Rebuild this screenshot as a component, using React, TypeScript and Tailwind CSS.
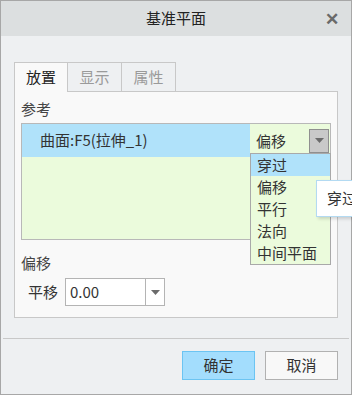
import React from 'react';

const font = { fontFamily: '"Microsoft YaHei", "Noto Sans CJK SC", "Liberation Sans", sans-serif' };

const options = ['穿过', '偏移', '平行', '法向', '中间平面'];

const Caret: React.FC = () => (
  <svg width="9" height="5" viewBox="0 0 9 5">
    <path d="M0 0 L9 0 L4.5 5 Z" fill="#6b6b6b" />
  </svg>
);

const App: React.FC = () => {
  return (
    <div
      className="w-[352px] h-[395px] overflow-hidden border border-[#a7a7a7] bg-[#eef0f2] flex flex-col text-[15px] text-[#333]"
      style={font}
    >
      {/* Title bar */}
      <div className="relative h-[35px] shrink-0 bg-[#dcdfe0] flex items-center justify-center">
        <span className="text-[#222]">基准平面</span>
        <span className="absolute right-[12px] top-[8px] text-[17px] font-bold text-[#6a6a6a] leading-none">✕</span>
      </div>

      <div className="px-[13px] pt-[26px]">
        {/* Tabs */}
        <div className="flex h-[29px]">
          <div className="w-[54px] border border-b-0 border-[#c8c8c8] bg-[#f9f9f9] flex items-center justify-center text-[#222] relative z-10 h-[30px]">
            放置
          </div>
          <div className="w-[54px] border border-l-0 border-b-0 border-[#c8c8c8] flex items-center justify-center text-[#9a9a9a]">
            显示
          </div>
          <div className="w-[54px] border border-l-0 border-b-0 border-[#c8c8c8] flex items-center justify-center text-[#9a9a9a]">
            属性
          </div>
        </div>

        {/* Panel */}
        <div className="h-[227px] border border-[#c8c8c8] bg-[#f9f9f9] pl-[6px] pr-[6px] pt-[6px]">
          <div className="leading-[22px] text-[#444]">参考</div>
          <div className="relative mt-[3px] h-[117px] border border-[#b8b8b8] bg-[#ebfbdc]">
            <div className="flex h-[33px]">
              <div className="w-[228px] bg-[#b0e2fa] flex items-center pl-[18px] pb-[1px]">曲面:F5(拉伸_1)</div>
              <div className="flex-1 flex items-center pl-[6px] pr-[1px]">
                <span className="flex-1 pt-[1px]">偏移</span>
                <div className="w-[20px] h-[24px] bg-[#c9c9c9] border border-[#8f8f8f] flex items-center justify-center">
                  <Caret />
                </div>
              </div>
            </div>

            {/* Dropdown list */}
            <div className="absolute left-[228px] top-[29px] w-[81px] border border-[#a9a9a9] bg-[#ebfbdc] z-10">
              {options.map((o, i) => (
                <div
                  key={o}
                  className={`h-[22px] leading-[22px] pl-[6px] ${i === 0 ? 'bg-[#b0e2fa]' : ''}`}
                >
                  {o}
                </div>
              ))}
            </div>
          </div>

          <div className="mt-[12px] leading-[22px] text-[#444]">偏移</div>
          <div className="flex items-center mt-[4px] pl-[7px]">
            <span className="w-[37px]">平移</span>
            <div className="flex w-[100px] h-[28px] border border-[#b4b4b4] bg-white">
              <span className="flex-1 flex items-center pl-[4px]">0.00</span>
              <div className="w-[19px] border-l border-[#b4b4b4] flex items-center justify-center">
                <Caret />
              </div>
            </div>
          </div>
        </div>
      </div>

      {/* Separator + buttons */}
      <div className="mt-[20px] border-t border-[#c8c8c8] mx-[2px]" />
      <div className="flex justify-end gap-[10px] pr-[13px] pt-[12px]">
        <button className="w-[73px] h-[29px] bg-[#a3ddfd] border border-[#6cc4f2] text-[#333]">确定</button>
        <button className="w-[73px] h-[29px] bg-[#f8f8f8] border border-[#b1b1b1] text-[#333]">取消</button>
      </div>

      {/* Tooltip */}
      <div className="absolute left-[316px] top-[180px] w-[60px] h-[37px] bg-white border border-[#b3daf2] shadow-[2px_2px_3px_rgba(0,0,0,0.15)] flex items-center pl-[10px] z-20">
        穿过
      </div>
    </div>
  );
};

export default App;
